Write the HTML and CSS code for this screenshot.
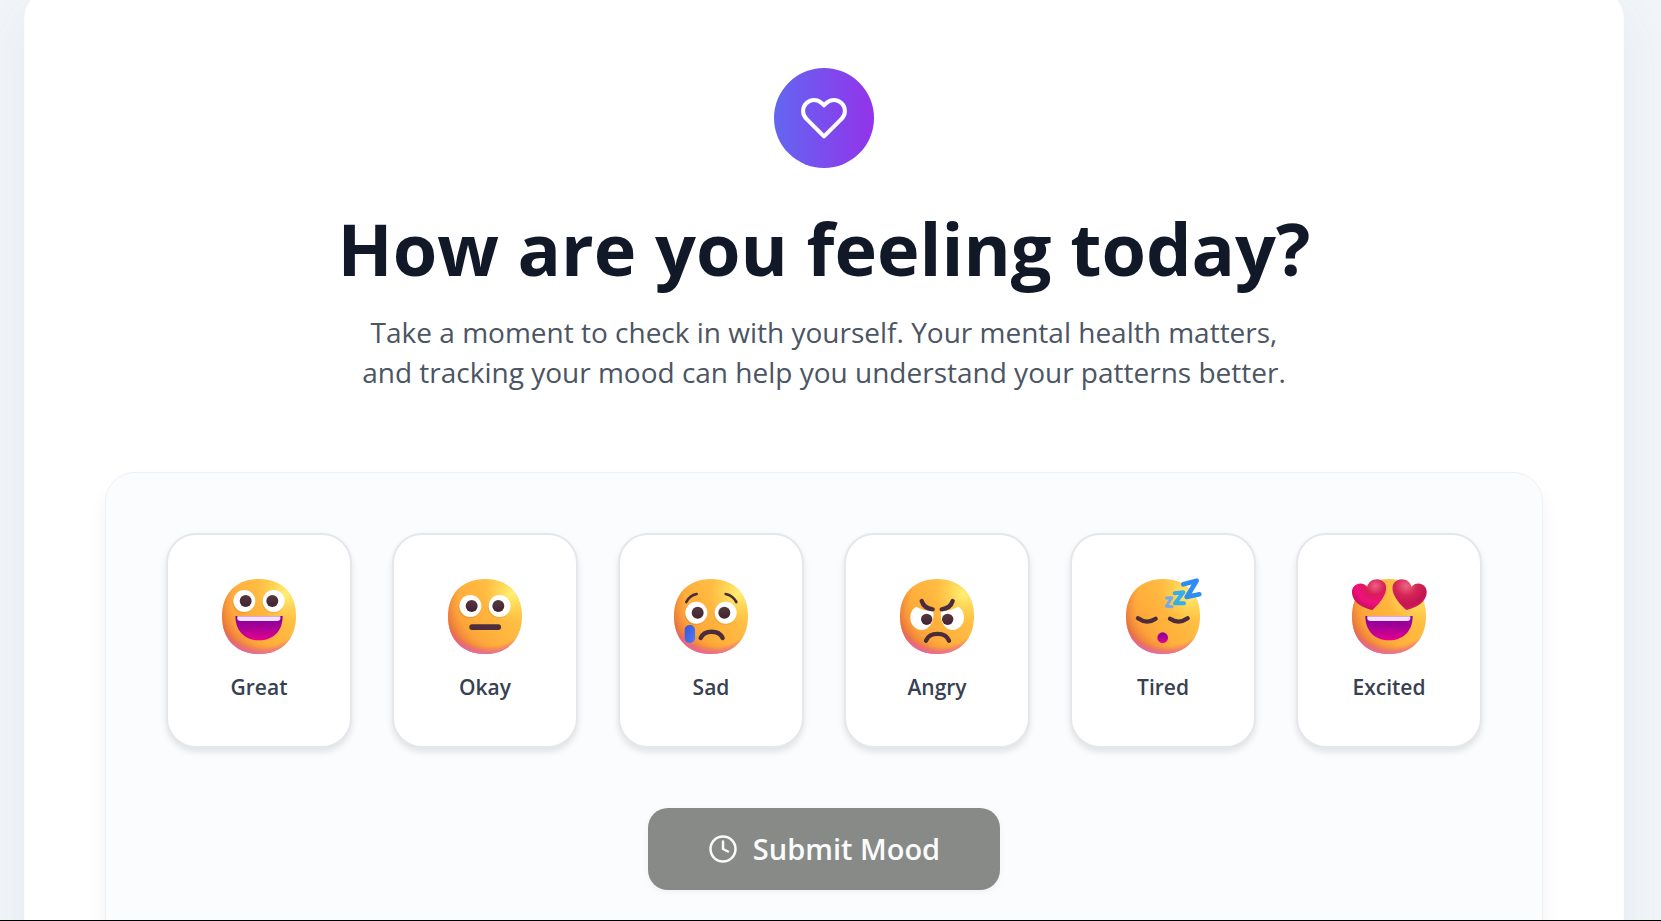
FILE: index.html
```html
<!DOCTYPE html>
<html lang="en">
<head>
    <meta charset="UTF-8">
    <meta name="viewport" content="width=device-width, initial-scale=1.0">
    <title>How are you feeling today?</title>
    <link rel="stylesheet" href="styles.css">
</head>
<body>
    <!-- Shared emoji parts -->
    <svg class="emoji-defs" aria-hidden="true">
        <defs>
            <linearGradient id="skin" x1="0.05" y1="0.8" x2="0.9" y2="0.2">
                <stop offset="0" stop-color="#f8943a"/>
                <stop offset="0.4" stop-color="#ffae3a"/>
                <stop offset="1" stop-color="#ffc548"/>
            </linearGradient>
            <radialGradient id="shine" cx="0.86" cy="0.2" r="0.4">
                <stop offset="0" stop-color="#fff176"/>
                <stop offset="1" stop-color="#ffd84d" stop-opacity="0"/>
            </radialGradient>
            <radialGradient id="edge" cx="0.64" cy="0.36" r="0.72">
                <stop offset="0.7" stop-color="#f0803c" stop-opacity="0"/>
                <stop offset="1" stop-color="#d9583f" stop-opacity="0.85"/>
            </radialGradient>
            <radialGradient id="blush" cx="0.54" cy="0.3" r="0.72">
                <stop offset="0.84" stop-color="#e85fa0" stop-opacity="0"/>
                <stop offset="0.99" stop-color="#e668b8" stop-opacity="0.9"/>
            </radialGradient>
            <linearGradient id="pupil" x1="0" y1="0" x2="0" y2="1">
                <stop offset="0" stop-color="#55393c"/>
                <stop offset="1" stop-color="#402233"/>
            </linearGradient>
            <linearGradient id="mouth" x1="0" y1="0" x2="0" y2="1">
                <stop offset="0" stop-color="#8a00a0"/>
                <stop offset="0.35" stop-color="#9b0098"/>
                <stop offset="1" stop-color="#e6008f"/>
            </linearGradient>
            <linearGradient id="tear" x1="0" y1="0" x2="1" y2="1">
                <stop offset="0" stop-color="#3c52d8"/>
                <stop offset="1" stop-color="#4b7dfa"/>
            </linearGradient>
            <radialGradient id="heart-left" cx="0.68" cy="0.22" r="0.8">
                <stop offset="0" stop-color="#ee6284"/>
                <stop offset="0.35" stop-color="#d91c58"/>
                <stop offset="0.7" stop-color="#f00f80"/>
                <stop offset="1" stop-color="#c01050"/>
            </radialGradient>
            <radialGradient id="heart-right" cx="0.6" cy="0.22" r="0.8">
                <stop offset="0" stop-color="#ec6685"/>
                <stop offset="0.4" stop-color="#d62455"/>
                <stop offset="0.75" stop-color="#c41553"/>
                <stop offset="1" stop-color="#d8186a"/>
            </radialGradient>
            <path id="head" d="M111 0C180 0 222 45 222 112C222 180 180 225 111 225C42 225 0 180 0 112C0 45 42 0 111 0Z"/>
            <g id="face">
                <use href="#head" fill="url(#skin)"/>
                <use href="#head" fill="url(#shine)"/>
                <use href="#head" fill="url(#edge)"/>
                <use href="#head" fill="url(#blush)"/>
            </g>
            <g id="eyes">
                <circle cx="65" cy="4" r="34" fill="#d9812b" opacity="0.35"/>
                <circle cx="153" cy="4" r="34" fill="#d9812b" opacity="0.25"/>
                <circle cx="67" cy="0" r="33" fill="#fff"/>
                <circle cx="155" cy="0" r="33" fill="#fff"/>
                <circle cx="71" cy="0" r="18" fill="url(#pupil)"/>
                <circle cx="151" cy="0" r="18" fill="url(#pupil)"/>
            </g>
            <g id="grin">
                <path d="M40 111H182C182 158 152 184 111 184C70 184 40 158 40 111Z" fill="url(#mouth)"/>
                <path d="M46 112H175V118Q175 126 166 126H56Q46 126 46 118Z" fill="#f3e2fb"/>
            </g>
            <path id="heart" d="M61 93C40 89 3 74 0 42C-2 14 30 4 46 24C50 -2 84 -7 98 12C114 36 84 74 61 93Z"/>
        </defs>
    </svg>

    <main class="mood-section">
        <header class="mood-header">
            <div class="heart-badge">
                <svg viewBox="0 0 24 24" aria-hidden="true">
                    <path d="M20.84 4.61a5.5 5.5 0 0 0-7.78 0L12 5.67l-1.06-1.06a5.5 5.5 0 0 0-7.78 7.78l1.06 1.06L12 21.23l7.78-7.78 1.06-1.06a5.5 5.5 0 0 0 0-7.78z"/>
                </svg>
            </div>
            <h1>How are you feeling today?</h1>
            <p>Take a moment to check in with yourself. Your mental health matters, and tracking your mood can help you understand your patterns better.</p>
        </header>

        <form class="mood-panel">
            <div class="mood-grid">
                <button type="button" class="mood-card">
                    <svg class="emoji" viewBox="0 0 222 225" aria-hidden="true">
                        <use href="#face"/>
                        <use href="#eyes" y="66"/>
                        <use href="#grin"/>
                    </svg>
                    <span>Great</span>
                </button>
                <button type="button" class="mood-card">
                    <svg class="emoji" viewBox="0 0 222 225" aria-hidden="true">
                        <use href="#face"/>
                        <use href="#eyes" y="81"/>
                        <rect x="64" y="136" width="95" height="17" rx="8" fill="#4d2e3f"/>
                    </svg>
                    <span>Okay</span>
                </button>
                <button type="button" class="mood-card">
                    <svg class="emoji" viewBox="0 0 222 225" aria-hidden="true">
                        <use href="#face"/>
                        <use href="#eyes" y="101"/>
                        <g class="line thin">
                            <path d="M37 69Q47 49 68 45"/>
                            <path d="M155 45Q176 49 187 69"/>
                        </g>
                        <path class="line" d="M80 177C92 152 134 152 146 177"/>
                        <rect x="32" y="138" width="31" height="54" rx="15" fill="url(#tear)"/>
                    </svg>
                    <span>Sad</span>
                </button>
                <button type="button" class="mood-card">
                    <svg class="emoji" viewBox="0 0 222 225" aria-hidden="true">
                        <use href="#face"/>
                        <path d="M49 83C62 91 80 96 100 96C104 128 88 153 66 153C45 153 31 136 31 117C31 100 38 88 49 83Z" fill="#fff"/>
                        <path d="M174 83C161 91 143 96 123 96C119 128 135 153 157 153C178 153 192 136 192 117C192 100 185 88 174 83Z" fill="#fff"/>
                        <circle cx="80" cy="121" r="17" fill="url(#pupil)"/>
                        <circle cx="143" cy="121" r="17" fill="url(#pupil)"/>
                        <path class="line" d="M65 66Q72 88 98 91"/>
                        <path class="line" d="M158 66Q151 88 125 91"/>
                        <path class="line" d="M78 185C89 158 136 158 147 185"/>
                    </svg>
                    <span>Angry</span>
                </button>
                <button type="button" class="mood-card">
                    <svg class="emoji" viewBox="0 0 222 225" aria-hidden="true">
                        <use href="#face"/>
                        <path class="line" d="M36 118Q63 137 89 119"/>
                        <path class="line" d="M132 119Q158 137 185 118"/>
                        <circle cx="110" cy="176" r="16" fill="url(#mouth)"/>
                        <path class="zed small" d="M121 57L137 56L121 82L138 83"/>
                        <path class="zed medium" d="M146 43L172 40L147 73L174 73"/>
                        <path class="zed large" d="M172 16L212 5L182 54L220 46"/>
                    </svg>
                    <span>Tired</span>
                </button>
                <button type="button" class="mood-card">
                    <svg class="emoji" viewBox="0 0 222 225" aria-hidden="true">
                        <use href="#face"/>
                        <use href="#heart" fill="url(#heart-left)"/>
                        <use href="#heart" fill="url(#heart-right)" transform="translate(224 0) scale(-1 1)"/>
                        <use href="#grin"/>
                    </svg>
                    <span>Excited</span>
                </button>
            </div>

            <button type="submit" class="submit-button" disabled>
                <svg viewBox="0 0 24 24" aria-hidden="true">
                    <circle cx="12" cy="12" r="10"/>
                    <path d="M12 6v6l4 2"/>
                </svg>
                Submit Mood
            </button>
        </form>
    </main>
</body>
</html>
```

FILE: styles.css
```css
* {
    box-sizing: border-box;
}

body {
    font-family: 'Segoe UI', 'Open Sans', 'Noto Sans', sans-serif;
    background: #f1f5f9;
    color: #111827;
    margin: 0;
    padding: 0 37px 0 24px;
    height: 100vh;
    overflow: hidden;
    border-bottom: 1px solid #000;
}

.emoji-defs {
    position: absolute;
    width: 0;
    height: 0;
}

.mood-section {
    max-width: 1600px;
    margin: -13px auto 0;
    padding: 80px;
    background-color: #fff;
    border: 1px solid #fbfcfe;
    border-radius: 32px;
    box-shadow: 0 25px 50px rgba(71, 105, 145, 0.08);
}

/* Header */
.mood-header {
    text-align: center;
    margin-bottom: 80px;
}

.heart-badge {
    display: flex;
    align-items: center;
    justify-content: center;
    width: 100px;
    height: 100px;
    margin: 0 auto 34px;
    border-radius: 50%;
    background: linear-gradient(to right, #6366f1, #9333ea);
}

.heart-badge svg {
    width: 48px;
    height: 48px;
    fill: none;
    stroke: #fff;
    stroke-width: 2;
    stroke-linecap: round;
    stroke-linejoin: round;
}

h1 {
    margin: 0 0 18px;
    font-size: 72px;
    font-weight: 700;
    line-height: 92px;
}

.mood-header p {
    max-width: 940px;
    margin: 0 auto;
    color: #4b5563;
    font-size: 28px;
    line-height: 40px;
}

/* Mood picker */
.mood-panel {
    padding: 60px;
    background-color: #fbfcfe;
    border: 1px solid #edf0f6;
    border-radius: 30px;
    box-shadow: 0 12px 20px rgba(0, 0, 0, 0.05);
}

.mood-grid {
    display: grid;
    grid-template-columns: repeat(6, 1fr);
    gap: 40px;
    margin-bottom: 60px;
}

.mood-card {
    display: flex;
    flex-direction: column;
    align-items: center;
    gap: 18px;
    padding: 44px 20px;
    background-color: #fff;
    border: 2px solid #e5e7eb;
    border-radius: 30px;
    box-shadow: 0 4px 6px rgba(0, 0, 0, 0.1);
    color: #374151;
    font-family: inherit;
    font-size: 21px;
    font-weight: 600;
    line-height: 30px;
    cursor: pointer;
}

.emoji {
    display: block;
    width: 74px;
    height: 75px;
    overflow: visible;
}

.line {
    fill: none;
    stroke: #4a2c3b;
    stroke-width: 13;
    stroke-linecap: round;
}

.thin {
    stroke-width: 8;
}

.zed {
    fill: none;
    stroke-linejoin: round;
    stroke-linecap: round;
}

.zed.small {
    stroke: #75a9e8;
    stroke-width: 9;
}

.zed.medium {
    stroke: #35aef0;
    stroke-width: 12;
}

.zed.large {
    stroke: #2f8cf5;
    stroke-width: 14;
}

.submit-button {
    display: flex;
    align-items: center;
    justify-content: center;
    gap: 15px;
    margin: 0 auto;
    padding: 20px 60px;
    background-color: #888a88;
    border: 0;
    border-radius: 20px;
    box-shadow: 0 2px 6px rgba(0, 0, 0, 0.05);
    color: #fafcfb;
    font-family: inherit;
    font-size: 29px;
    font-weight: 600;
    line-height: 42px;
}

.submit-button svg {
    width: 30px;
    height: 30px;
    fill: none;
    stroke: currentColor;
    stroke-width: 2;
    stroke-linecap: round;
    stroke-linejoin: round;
}
```
